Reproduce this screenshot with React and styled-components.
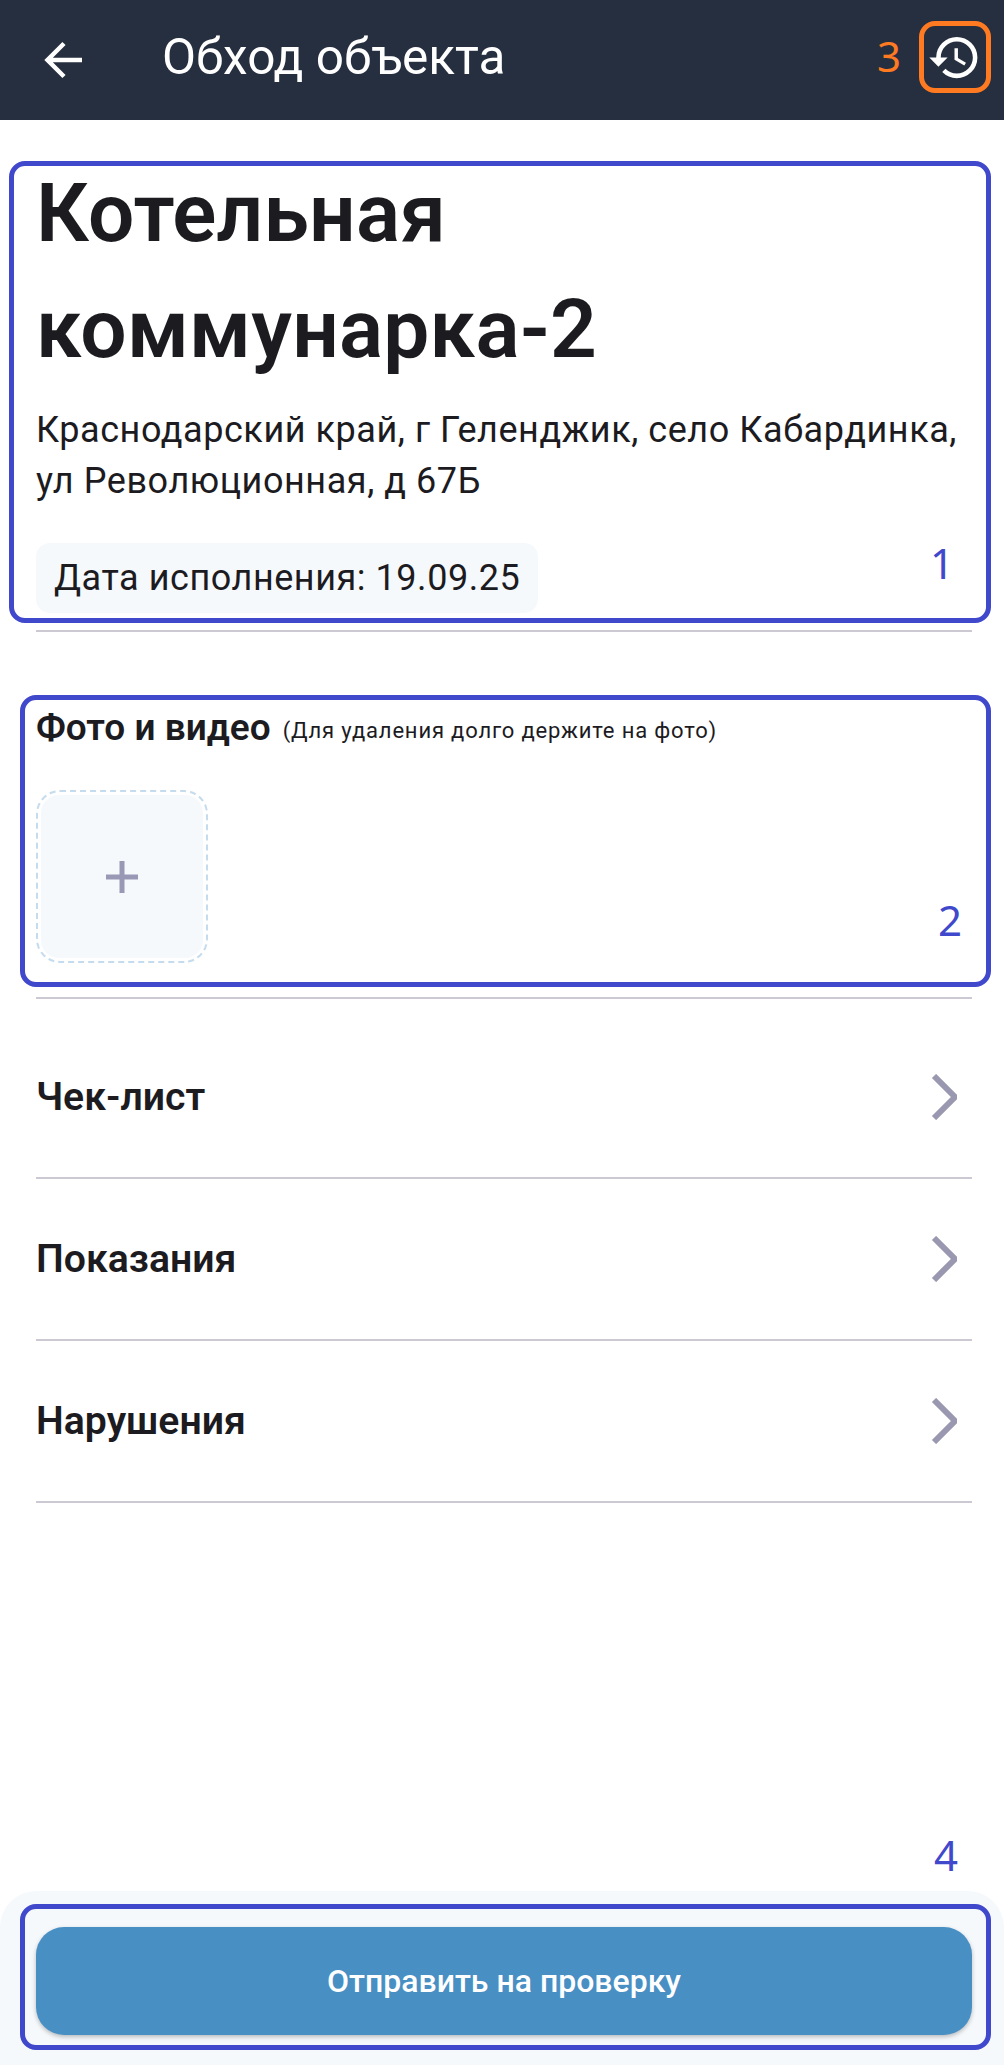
import React from 'react'
import styled, { createGlobalStyle } from 'styled-components'
import { MdHistory } from 'react-icons/md'

const GlobalStyle = createGlobalStyle`
  html, body {
    margin: 0;
    padding: 0;
    background: #fff;
  }
  * {
    box-sizing: border-box;
  }
`

const Page = styled.div`
  position: relative;
  width: 1004px;
  height: 2065px;
  display: flex;
  flex-direction: column;
  font-family: Roboto, "Noto Sans", sans-serif;
  color: #1c1b1f;
  overflow: hidden;
`

const Header = styled.header`
  height: 120px;
  flex: none;
  background: #262f3f;
  display: flex;
  align-items: center;
  padding: 0 14px 0 44px;
  color: #fff;
`

const HeaderTitle = styled.h1`
  margin: -7px 0 0 78px;
  font-size: 49.5px;
  line-height: 56px;
  font-weight: 400;
  flex: 1;
`

const HistoryButton = styled.div`
  width: 72px;
  height: 72px;
  margin-top: -6px;
  display: flex;
  align-items: center;
  justify-content: center;
`

const HistoryIcon = styled(MdHistory)`
  width: 55px;
  height: 55px;
`

const Content = styled.main`
  flex: 1;
  padding: 35px 32px 0 36px;
  display: flex;
  flex-direction: column;
`

const ObjectName = styled.h2`
  margin: 0;
  font-size: 82px;
  line-height: 116px;
  font-weight: 600;
  letter-spacing: 0.2px;
`

const Address = styled.p`
  margin: 18px 0 0;
  font-size: 36px;
  line-height: 51px;
  letter-spacing: 0.56px;
`

const DateChip = styled.div`
  align-self: flex-start;
  margin-top: 36px;
  height: 70px;
  padding: 0 18px;
  display: flex;
  align-items: center;
  background: #f6f9fc;
  border-radius: 14px;
  font-size: 36px;
  letter-spacing: 0.55px;
`

const Divider = styled.div`
  height: 2px;
  flex: none;
  margin-top: ${p => p.$top || 0}px;
  background: #cdc9d3;
`

const MediaSection = styled.section`
  margin-top: 71px;
  padding-bottom: 34px;
`

const MediaHeading = styled.div`
  display: flex;
  align-items: baseline;
  gap: 12px;
  height: 50px;
`

const MediaTitle = styled.span`
  font-size: 37px;
  font-weight: 600;
  line-height: 50px;
`

const MediaHint = styled.span`
  font-size: 22px;
  letter-spacing: 0.83px;
  position: relative;
  top: -2px;
`

const AddTile = styled.div`
  margin-top: 37px;
  width: 172px;
  height: 173px;
  padding: 3px;
  border: 2px dashed #c5dcee;
  border-radius: 24px;
  background: #fff;
`

const AddTileFill = styled.div`
  height: 100%;
  border-radius: 18px;
  background: #f6f9fc;
  display: flex;
  align-items: center;
  justify-content: center;
`

const MenuList = styled.nav`
  padding-top: 18px;
  display: flex;
  flex-direction: column;
`

const MenuRow = styled.div`
  height: 160px;
  display: flex;
  align-items: center;
  justify-content: space-between;
  font-size: 39.2px;
  font-weight: 600;
  padding-right: 15px;
`

const Footer = styled.footer`
  flex: none;
  height: 174px;
  padding: 36px 32px 30px 36px;
  background: #f6f9fc;
  border-radius: 36px 36px 0 0;
`

const SubmitButton = styled.div`
  height: 108px;
  border-radius: 28px;
  background: #488fc4;
  box-shadow: 0 2px 4px rgba(0, 0, 0, 0.25);
  color: #fff;
  font-size: 32px;
  font-weight: 500;
  display: flex;
  align-items: center;
  justify-content: center;
`

/* разметка поверх скриншота */
const Marker = styled.div`
  position: absolute;
  left: ${p => p.$x}px;
  top: ${p => p.$y}px;
  width: ${p => p.$w}px;
  height: ${p => p.$h}px;
  border: 5px solid ${p => p.$color};
  border-radius: 16px;
  pointer-events: none;
`

const MarkerNumber = styled.span`
  position: absolute;
  left: ${p => p.$x}px;
  top: ${p => p.$y}px;
  color: ${p => p.$color};
  font-family: "Noto Sans", sans-serif;
  font-size: 42px;
  line-height: 50px;
`

const BLUE = '#4048cc'
const ORANGE = '#ff7a21'

const BackArrow = () => (
  <svg width="40" height="40" viewBox="0 0 40 40" fill="none">
    <path d="M38 20 H4 M20 3.5 L3.5 20 L20 36.5" stroke="#fff" strokeWidth="4.5" />
  </svg>
)

const Chevron = () => (
  <svg width="26" height="46" viewBox="0 0 26 46" fill="none">
    <path d="M3 2 L24 23 L3 44" stroke="#9998b0" strokeWidth="6" />
  </svg>
)

const Plus = () => (
  <svg width="32" height="32" viewBox="0 0 32 32" fill="none">
    <path d="M16 0 V32 M0 16 H32" stroke="#9998b5" strokeWidth="5" />
  </svg>
)

const rows = ['Чек-лист', 'Показания', 'Нарушения']

export default function App() {
  return (
    <Page>
      <GlobalStyle />
      <Header>
        <BackArrow />
        <HeaderTitle>Обход объекта</HeaderTitle>
        <HistoryButton>
          <HistoryIcon />
        </HistoryButton>
      </Header>
      <Content>
        <ObjectName>Котельная коммунарка-2</ObjectName>
        <Address>Краснодарский край, г Геленджик, село Кабардинка, ул Революционная, д 67Б</Address>
        <DateChip>Дата исполнения: 19.09.25</DateChip>
        <Divider $top={17} />
        <MediaSection>
          <MediaHeading>
            <MediaTitle>Фото и видео</MediaTitle>
            <MediaHint>(Для удаления долго держите на фото)</MediaHint>
          </MediaHeading>
          <AddTile>
            <AddTileFill>
              <Plus />
            </AddTileFill>
          </AddTile>
        </MediaSection>
        <Divider />
        <MenuList>
          {rows.map(row => (
            <React.Fragment key={row}>
              <MenuRow>
                {row}
                <Chevron />
              </MenuRow>
              <Divider />
            </React.Fragment>
          ))}
        </MenuList>
      </Content>
      <Footer>
        <SubmitButton>Отправить на проверку</SubmitButton>
      </Footer>

      <Marker $x={9} $y={161} $w={982} $h={462} $color={BLUE} />
      <Marker $x={20} $y={695} $w={971} $h={292} $color={BLUE} />
      <Marker $x={919} $y={21} $w={72} $h={72} $color={ORANGE} />
      <Marker $x={20} $y={1904} $w={971} $h={146} $color={BLUE} />
      <MarkerNumber $x={930} $y={538} $color={BLUE}>1</MarkerNumber>
      <MarkerNumber $x={938} $y={895} $color={BLUE}>2</MarkerNumber>
      <MarkerNumber $x={877} $y={31} $color={ORANGE}>3</MarkerNumber>
      <MarkerNumber $x={934} $y={1830} $color={BLUE}>4</MarkerNumber>
    </Page>
  )
}
